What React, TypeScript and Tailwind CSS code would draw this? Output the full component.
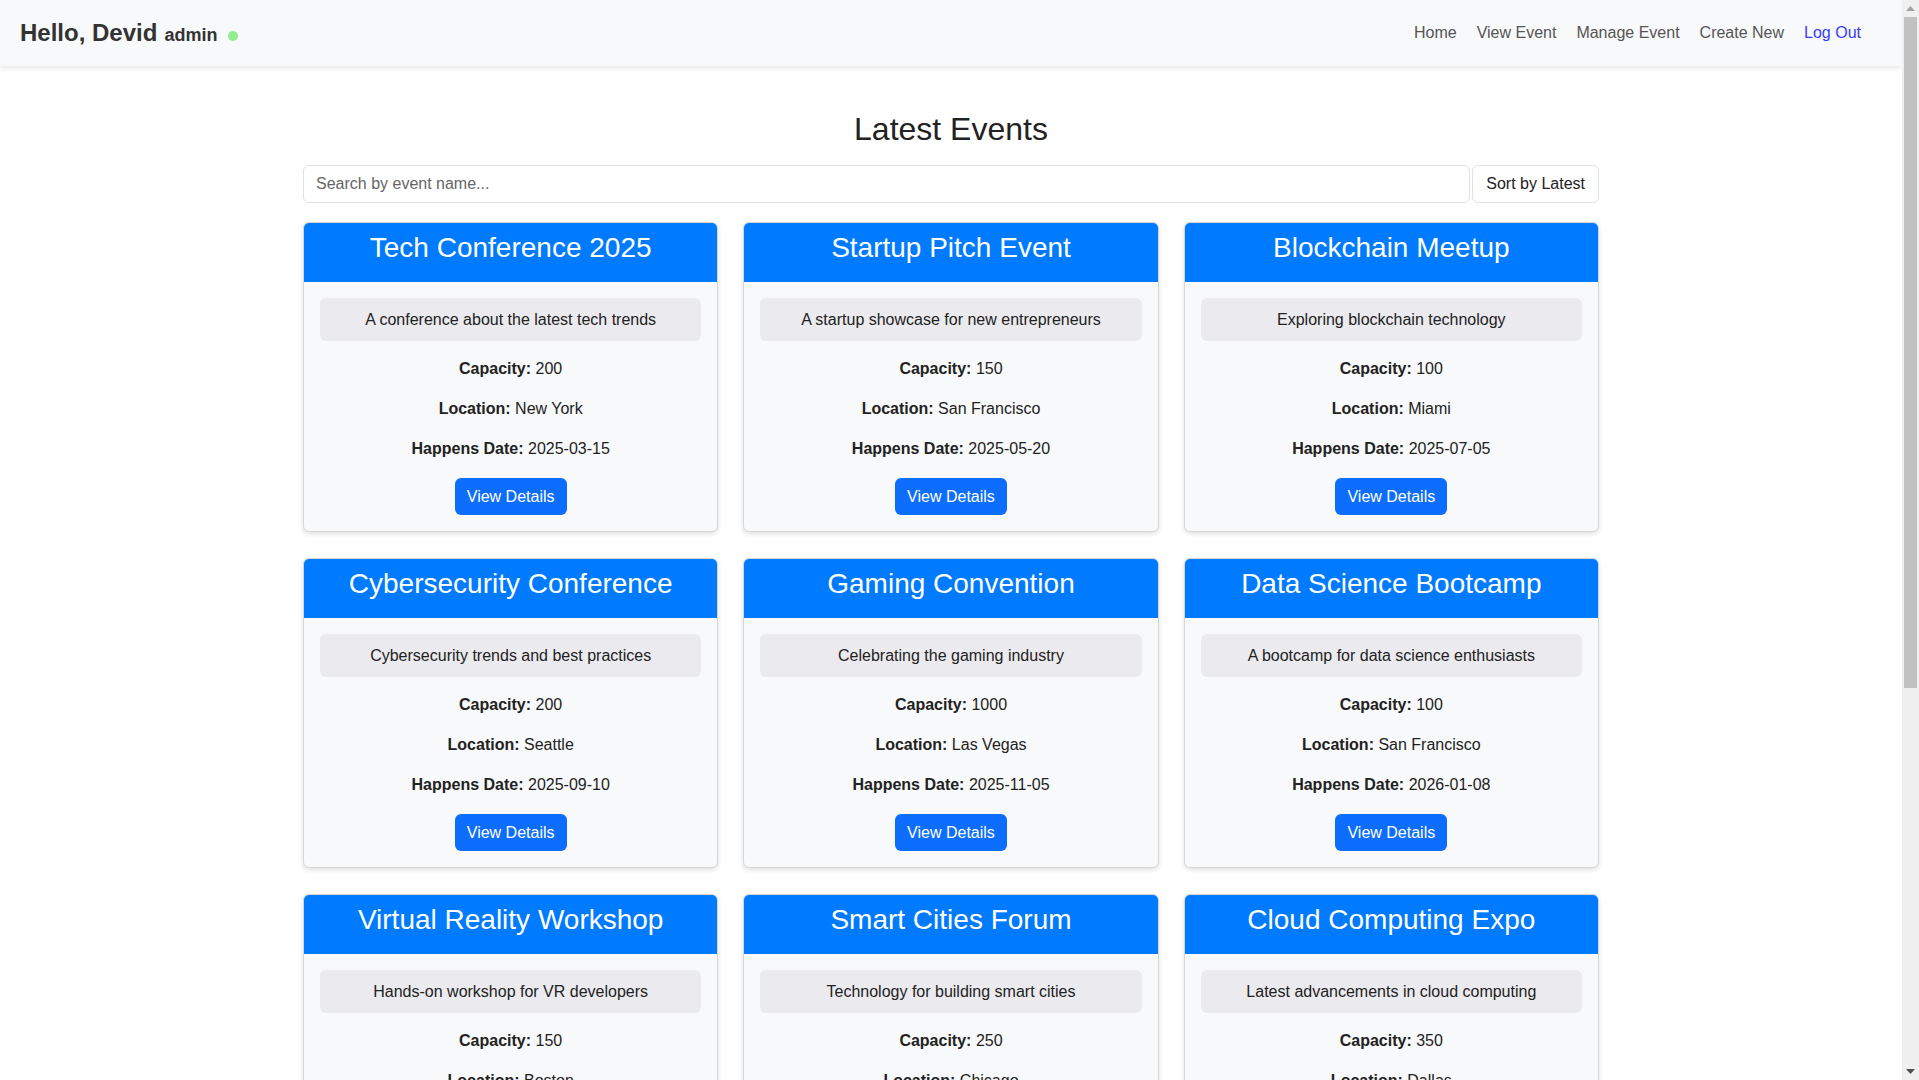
import React, { useState } from 'react';

interface EventItem {
  id: number;
  name: string;
  description: string;
  capacity: number;
  location: string;
  date: string;
}

const events: EventItem[] = [
  { id: 1, name: 'Tech Conference 2025', description: 'A conference about the latest tech trends', capacity: 200, location: 'New York', date: '2025-03-15' },
  { id: 2, name: 'Startup Pitch Event', description: 'A startup showcase for new entrepreneurs', capacity: 150, location: 'San Francisco', date: '2025-05-20' },
  { id: 3, name: 'Blockchain Meetup', description: 'Exploring blockchain technology', capacity: 100, location: 'Miami', date: '2025-07-05' },
  { id: 4, name: 'Cybersecurity Conference', description: 'Cybersecurity trends and best practices', capacity: 200, location: 'Seattle', date: '2025-09-10' },
  { id: 5, name: 'Gaming Convention', description: 'Celebrating the gaming industry', capacity: 1000, location: 'Las Vegas', date: '2025-11-05' },
  { id: 6, name: 'Data Science Bootcamp', description: 'A bootcamp for data science enthusiasts', capacity: 100, location: 'San Francisco', date: '2026-01-08' },
  { id: 7, name: 'Virtual Reality Workshop', description: 'Hands-on workshop for VR developers', capacity: 150, location: 'Boston', date: '2026-02-14' },
  { id: 8, name: 'Smart Cities Forum', description: 'Technology for building smart cities', capacity: 250, location: 'Chicago', date: '2026-03-22' },
  { id: 9, name: 'Cloud Computing Expo', description: 'Latest advancements in cloud computing', capacity: 350, location: 'Dallas', date: '2026-04-18' },
];

function Navbar() {
  return (
    <nav className="flex h-[66px] items-center justify-between bg-[#f8f9fa] pl-5 pr-[31px] shadow-[0_2px_6px_rgba(0,0,0,0.1)]">
      <div className="flex items-baseline text-[#333]">
        <span className="text-[24px] font-bold">Hello, Devid</span>
        <span className="ml-[7px] text-[18px] font-bold">admin</span>
        <span className="ml-[11px] inline-block h-[10px] w-[10px] rounded-full bg-[#90ee90]"></span>
      </div>
      <ul className="flex text-[16px]">
        <li><a href="#" className="px-[10px] text-[#555]">Home</a></li>
        <li><a href="#" className="px-[10px] text-[#555]">View Event</a></li>
        <li><a href="#" className="px-[10px] text-[#555]">Manage Event</a></li>
        <li><a href="#" className="px-[10px] text-[#555]">Create New</a></li>
        <li><a href="#" className="px-[10px] text-[#3a3aff]">Log Out</a></li>
      </ul>
    </nav>
  );
}

// page scrollbar as it shows in the window
function ScrollTrack() {
  return (
    <div className="fixed right-0 top-0 flex h-screen w-[17px] flex-col items-center bg-[#f0f0f0]">
      <div className="flex h-[17px] w-full items-center justify-center">
        <svg width="9" height="5" viewBox="0 0 9 5"><path d="M0 5 L4.5 0 L9 5 Z" fill="#a3a3a3" /></svg>
      </div>
      <div className="h-[671px] w-[13px] bg-[#c1c1c1]"></div>
      <div className="flex-1"></div>
      <div className="flex h-[17px] w-full items-center justify-center">
        <svg width="9" height="5" viewBox="0 0 9 5"><path d="M0 0 L9 0 L4.5 5 Z" fill="#505050" /></svg>
      </div>
    </div>
  );
}

function EventCard({ event }: { event: EventItem }) {
  return (
    <div className="overflow-hidden rounded-[6px] border border-[#d6d6d6] bg-[#f8f9fa] shadow-[0_2px_5px_rgba(0,0,0,0.12)]">
      <div className="h-[59px] bg-[#007bff] pt-[8px] text-center">
        <h3 className="text-[28px] leading-[33px] text-white">{event.name}</h3>
      </div>
      <div className="px-4 pb-4 pt-4 text-center text-[16px] text-[#222]">
        <div className="rounded-[6px] bg-[#ebebef] py-3 leading-[19px] text-[#222]">{event.description}</div>
        <p className="mt-4 leading-6"><strong>Capacity:</strong> {event.capacity}</p>
        <p className="mt-4 leading-6"><strong>Location:</strong> {event.location}</p>
        <p className="mt-4 leading-6"><strong>Happens Date:</strong> {event.date}</p>
        <button className="mt-[17px] h-[37px] rounded-[6px] bg-[#0d6efd] px-3 text-[16px] text-white">View Details</button>
      </div>
    </div>
  );
}

export default function App() {
  const [query, setQuery] = useState('');
  const shown = events.filter((e) => e.name.toLowerCase().includes(query.toLowerCase()));

  return (
    <div className="min-h-screen bg-white font-['Liberation_Sans',Arial,sans-serif] text-[#222]">
      <div className="mr-[17px]">
        <Navbar />
        <main className="mx-auto w-[1296px] pb-[481px]">
          <h2 className="mt-[44px] text-center text-[32px] leading-[38px] text-[#222]">Latest Events</h2>
          <div className="mt-[17px] flex gap-[2px]">
            <input
              value={query}
              onChange={(e) => setQuery(e.target.value)}
              placeholder="Search by event name..."
              className="h-[38px] flex-1 rounded-[6px] border border-[#dee2e6] px-3 text-[16px] text-[#222] outline-none placeholder:text-[#666]"
            />
            <button className="h-[38px] rounded-[6px] border border-[#dee2e6] bg-white px-[13px] text-[16px] text-[#222]">Sort by Latest</button>
          </div>
          <div className="mt-[19px] grid grid-cols-3 gap-x-[25px] gap-y-[26px]">
            {shown.map((e) => (
              <EventCard key={e.id} event={e} />
            ))}
          </div>
        </main>
      </div>
      <ScrollTrack />
    </div>
  );
}
